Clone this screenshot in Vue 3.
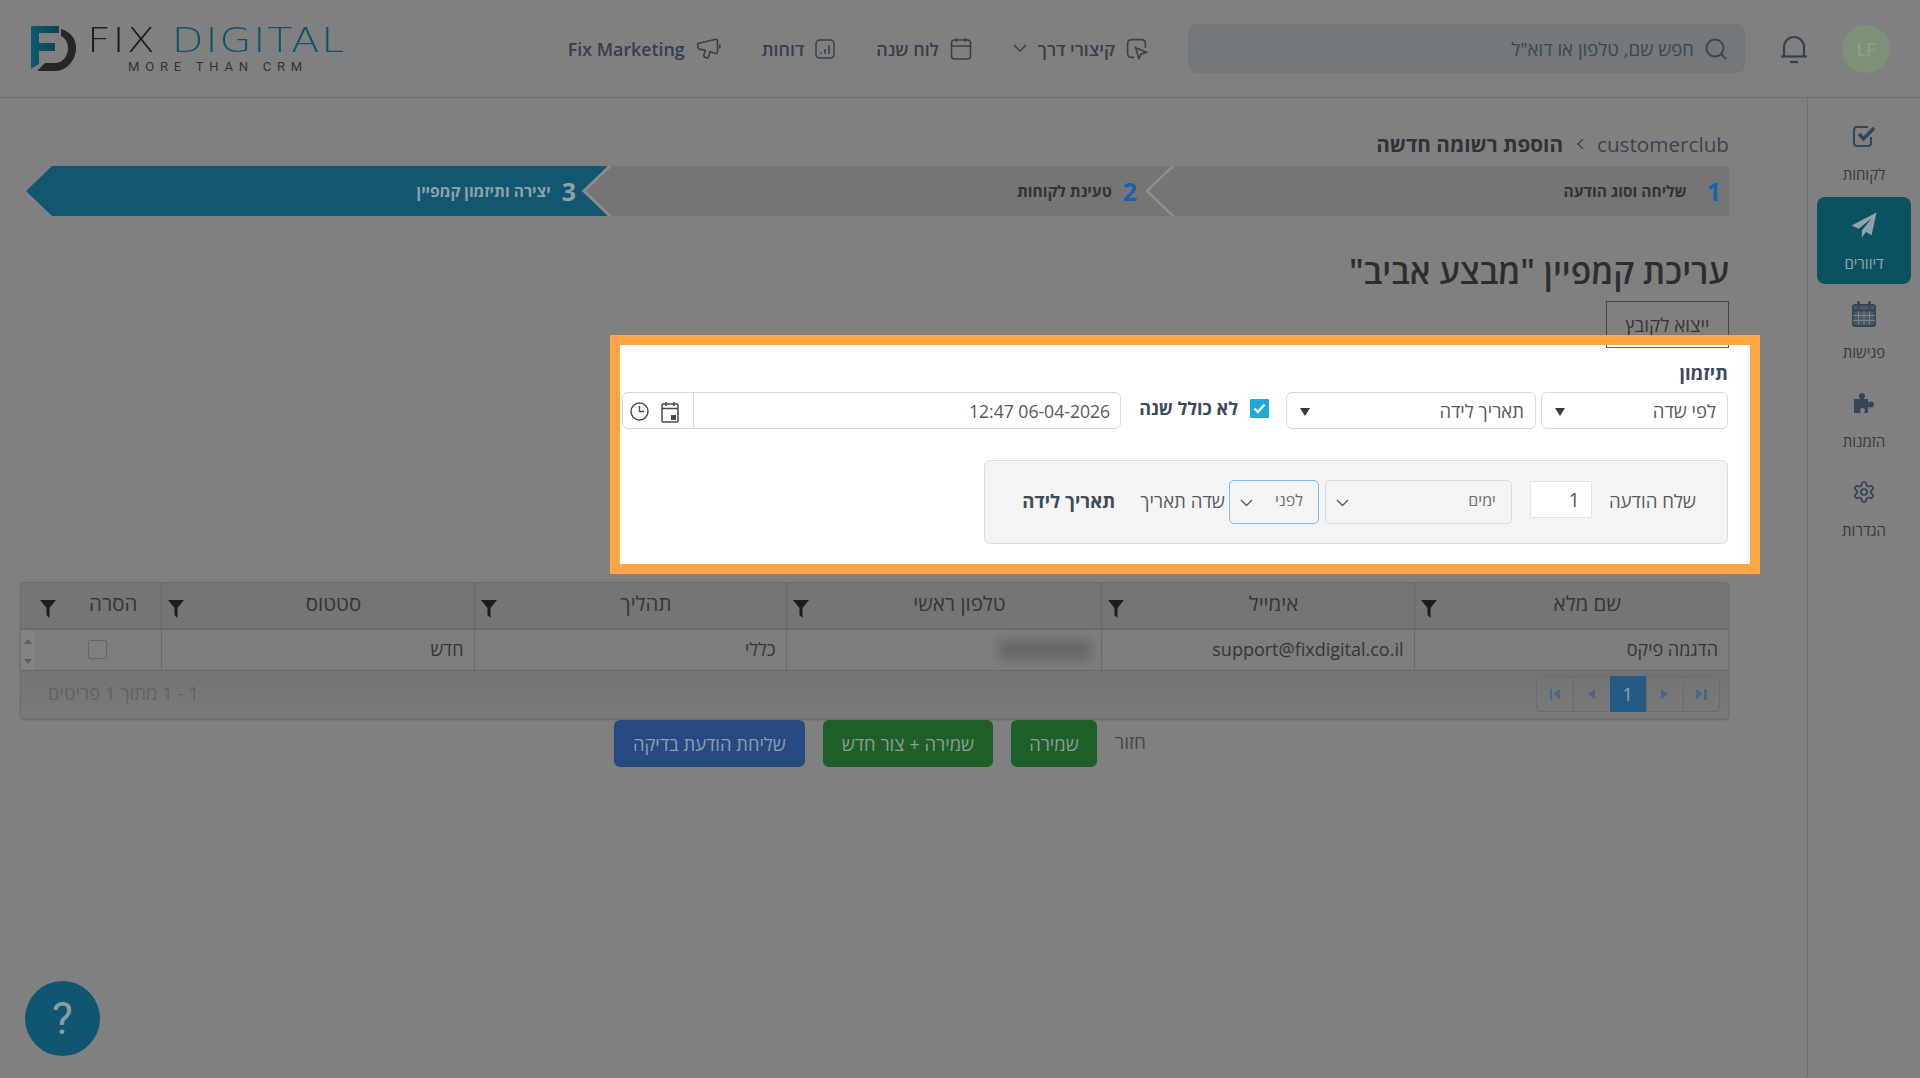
<template>
  <div class="app">
    <header class="topbar">
      <div class="avatar">LF</div>
      <svg class="bell" width="28" height="30" viewBox="0 0 28 30" fill="none" stroke="#36414e" stroke-width="2.200">
        <path d="M4 22V13a10 10 0 0 1 20 0v9" />
        <path d="M1 22.500h26" />
        <path d="M10 28h8" />
      </svg>
      <div class="search">
        <svg width="24" height="24" viewBox="0 0 24 24" fill="none" stroke="#40484e" stroke-width="2">
          <circle cx="11" cy="11" r="8.500" />
          <path d="M17.500 17.500L22 22" />
        </svg>
        <span>חפש שם, טלפון או דוא"ל</span>
      </div>
      <nav class="nav">
        <a class="nav-item">
          <svg width="22" height="22" viewBox="560 28 68 68" fill="none" stroke="#36414e" stroke-width="5">
            <path d="M585 88H578Q565 88 565 75V46Q565 33 578 33H607Q620 33 620 46V58" />
            <path d="M590 58L623 72 606 78 600 92Z" />
          </svg>
          <span>קיצורי דרך</span>
          <svg width="14" height="9" viewBox="0 0 14 9" fill="none" stroke="#36414e" stroke-width="1.500">
            <path d="M1 1l6 6 6-6" />
          </svg>
        </a>
        <a class="nav-item">
          <svg width="22" height="24" viewBox="0 0 22 24" fill="none" stroke="#36414e" stroke-width="1.600">
            <rect x="1.500" y="3" width="19" height="19" rx="3" />
            <path d="M1.500 9h19M6.500 1v4M15.500 1v4" />
          </svg>
          <span>לוח שנה</span>
        </a>
        <a class="nav-item">
          <svg width="20" height="20" viewBox="0 0 20 20" fill="none" stroke="#36414e" stroke-width="1.500">
            <rect x="1" y="1" width="18" height="18" rx="3.500" />
            <path d="M6 15v-1.500M10 15v-5M14 15V6" />
          </svg>
          <span>דוחות</span>
        </a>
        <a class="nav-item">
          <svg width="25" height="23" viewBox="10 25 75 70" fill="none" stroke="#36414e" stroke-width="5">
            <path d="M15 45L70 32Q75 32 75 38V70Q75 76 70 75L52 70 48 85Q46 90 40 88L34 85Q32 83 34 78L38 66 20 62Q15 60 15 55Z" />
            <path d="M82 48v12" />
          </svg>
          <span dir="ltr">Fix Marketing</span>
        </a>
      </nav>
      <div class="logo">
        <svg width="46" height="46" viewBox="0 0 46 46">
          <defs>
            <linearGradient id="logoTeal" x1="0" y1="0" x2="1" y2="0">
              <stop offset="0" stop-color="#0d5a70" />
              <stop offset="1" stop-color="#0b4352" />
            </linearGradient>
          </defs>
          <path d="M0 0H28V7H8V17H24V25H8V38L0 43Z" fill="url(#logoTeal)" />
          <path d="M30 3C40 6 45 13 45 22C45 34 36 45 24 45H6L14 37H24C32 37 37 30 37 22C37 16 34 12 30 10Z" fill="#262626" />
        </svg>
        <div class="logo-text">
          <div class="logo-name"><span class="logo-fix">FIX</span> <span class="logo-digital">DIGITAL</span></div>
          <div class="logo-tag">MORE THAN CRM</div>
        </div>
      </div>
    </header>

    <div class="layout">
      <aside class="sidebar">
        <a class="side-item">
          <svg width="24" height="24" viewBox="0 0 24 24" fill="none" stroke="#36465a" stroke-width="2">
            <path d="M19 13v6a3 3 0 0 1-3 3H5a3 3 0 0 1-3-3V6a3 3 0 0 1 3-3h11" />
            <path d="M7 10l4.500 5L22 4" stroke-width="3.500" />
          </svg>
          <span>לקוחות</span>
        </a>
        <a class="side-item active">
          <svg width="26" height="26" viewBox="0 0 24 24" fill="#8fa3a8">
            <path d="M23.500 .5L.5 12.500 7 15.500 19 6 10 17v6.500l4-5 5 3z" />
          </svg>
          <span>דיוורים</span>
        </a>
        <a class="side-item">
          <svg width="24" height="26" viewBox="0 0 24 26" fill="none" stroke="#36465a">
            <rect x="1" y="4" width="22" height="21" rx="2" stroke-width="2" fill="#4a5868" />
            <path d="M1 9.500h22" stroke-width="2.500" />
            <path d="M6.500 10v14M12 10v14M17.500 10v14M1 14.500h22M1 19.500h22" stroke-width="1" stroke="#7a8086" />
            <path d="M6.500 1v5M17.500 1v5" stroke-width="2.500" stroke-linecap="round" />
          </svg>
          <span>פגישות</span>
        </a>
        <a class="side-item">
          <svg width="24" height="24" viewBox="0 -1 24 24" fill="#36465a">
            <path d="M2 7H8C8 6 7 5.500 7 4A3 3 0 0 1 13 4C13 5.500 12 6 12 7H16V10C17 10 17.500 9.500 19 9.500A3 3 0 0 1 19 15.500C17.500 15.500 17 15 16 15V21H12C12 20 13 19.500 13 18.500A2.500 2.500 0 0 0 8 18.500C8 19.500 9 20 9 21H2Z" />
          </svg>
          <span>הזמנות</span>
        </a>
        <a class="side-item">
          <svg width="24" height="24" viewBox="0 0 24 24" fill="none" stroke="#36465a" stroke-width="1.700">
            <path d="M12.220 2h-.44a2 2 0 0 0-2 2v.18a2 2 0 0 1-1 1.730l-.43.250a2 2 0 0 1-2 0l-.15-.08a2 2 0 0 0-2.730.730l-.22.380a2 2 0 0 0 .73 2.730l.15.1a2 2 0 0 1 1 1.720v.51a2 2 0 0 1-1 1.740l-.15.09a2 2 0 0 0-.73 2.730l.22.380a2 2 0 0 0 2.730.730l.15-.08a2 2 0 0 1 2 0l.43.250a2 2 0 0 1 1 1.730V20a2 2 0 0 0 2 2h.44a2 2 0 0 0 2-2v-.18a2 2 0 0 1 1-1.730l.43-.25a2 2 0 0 1 2 0l.15.08a2 2 0 0 0 2.730-.73l.22-.39a2 2 0 0 0-.73-2.730l-.15-.08a2 2 0 0 1-1-1.740v-.5a2 2 0 0 1 1-1.740l.15-.09a2 2 0 0 0 .73-2.730l-.22-.38a2 2 0 0 0-2.730-.73l-.15.08a2 2 0 0 1-2 0l-.43-.25a2 2 0 0 1-1-1.730V4a2 2 0 0 0-2-2z" />
            <circle cx="12" cy="12" r="3" />
          </svg>
          <span>הגדרות</span>
        </a>
      </aside>

      <main class="main">
        <div class="crumbs">
          <span dir="ltr">customerclub</span>
          <svg width="8" height="12" viewBox="0 0 8 12" fill="none" stroke="#3a4450" stroke-width="1.300"><path d="M7 1L2 6l5 5" /></svg>
          <strong>הוספת רשומה חדשה</strong>
        </div>

        <div class="steps">
          <div v-for="step in steps" :key="step.num" class="step" :class="'step-' + step.num">
            <span class="step-num">{{ step.num }}</span>
            <span class="step-label">{{ step.label }}</span>
          </div>
        </div>

        <h1 class="title">עריכת קמפיין "מבצע אביב"</h1>
        <button class="export">ייצוא לקובץ</button>

        <section class="card">
          <div class="export-tail"></div>
          <div class="card-title">תיזמון</div>
          <div class="sched-row">
            <div class="select sel-type">לפי שדה<i class="tri"></i></div>
            <div class="select sel-field">תאריך לידה<i class="tri"></i></div>
            <label class="check">
              <span class="check-box">
                <svg width="13" height="11" viewBox="0 0 13 11" fill="none" stroke="#fff" stroke-width="2.400"><path d="M1.500 5.500l3.500 3.500 6.500-7.500" /></svg>
              </span>
              <b>לא כולל שנה</b>
            </label>
            <div class="date">
              <span class="date-value" dir="ltr">12:47 06-04-2026</span>
              <span class="date-btns">
                <svg width="18" height="22" viewBox="0 0 18 22" fill="none" stroke="#4a4a4a" stroke-width="1.500">
                  <rect x="1" y="3" width="16" height="18" rx="1" />
                  <path d="M1 7.500h16M5 1v4M13 1v4" />
                  <rect x="10" y="14" width="5" height="5" fill="#4a4a4a" stroke="none" />
                </svg>
                <svg width="19" height="19" viewBox="0 0 19 19" fill="none" stroke="#4a4a4a" stroke-width="1.400">
                  <circle cx="9.500" cy="9.500" r="8.500" />
                  <path d="M9.500 4v5.500H14" />
                </svg>
              </span>
            </div>
          </div>

          <div class="panel">
            <span class="panel-label first">שלח הודעה</span>
            <div class="num-input">1</div>
            <div class="pick pick-unit">ימים<svg class="chev" width="13" height="8" viewBox="0 0 13 8" fill="none" stroke="#555" stroke-width="1.300"><path d="M1 1l5.500 5.500L12 1" /></svg></div>
            <div class="pick pick-when">לפני<svg class="chev" width="13" height="8" viewBox="0 0 13 8" fill="none" stroke="#555" stroke-width="1.300"><path d="M1 1l5.500 5.500L12 1" /></svg></div>
            <span class="panel-label">שדה תאריך</span>
            <b class="panel-value">תאריך לידה</b>
          </div>
        </section>

        <div class="grid">
          <table>
            <colgroup>
              <col v-for="col in columns" :key="col.title" :style="{ width: col.width + 'px' }" />
            </colgroup>
            <thead>
              <tr>
                <th v-for="col in columns" :key="col.title" :class="{ 'th-remove': col.title === 'הסרה' }">
                  <div class="th-inner">
                    <span>{{ col.title }}</span>
                    <svg width="16" height="18" viewBox="0 0 16 18" fill="#1c1c1c"><path d="M0 0H16L9.500 8V18L6.500 15V8Z" /></svg>
                  </div>
                </th>
              </tr>
            </thead>
            <tbody>
              <tr>
                <td>הדגמה פיקס</td>
                <td dir="ltr" class="td-email">support@fixdigital.co.il</td>
                <td class="td-phone"><span class="blurred"></span></td>
                <td>כללי</td>
                <td>חדש</td>
                <td class="td-remove">
                  <div class="remove-wrap">
                    <span class="row-check"></span>
                    <span class="gutter">
                      <i class="up"></i>
                      <i class="down"></i>
                    </span>
                  </div>
                </td>
              </tr>
            </tbody>
          </table>
          <div class="grid-foot">
            <div class="pager">
              <a><i class="arr-r"></i><i class="bar"></i></a>
              <a><i class="arr-r"></i></a>
              <a class="current">1</a>
              <a><i class="arr-l"></i></a>
              <a><i class="bar"></i><i class="arr-l"></i></a>
            </div>
            <span class="foot-info">1 - 1 מתוך 1 פריטים</span>
          </div>
        </div>

        <div class="actions">
          <a class="back">חזור</a>
          <button class="btn green compact">שמירה</button>
          <button class="btn green">שמירה + צור חדש</button>
          <button class="btn blue">שליחת הודעת בדיקה</button>
        </div>
      </main>
    </div>

    <a class="help">?</a>
  </div>
</template>

<script setup>
const steps = [
  { num: 1, label: 'שליחה וסוג הודעה' },
  { num: 2, label: 'טעינת לקוחות' },
  { num: 3, label: 'יצירה ותיזמון קמפיין' },
]

const columns = [
  { title: 'שם מלא', width: 314 },
  { title: 'אימייל', width: 313 },
  { title: 'טלפון ראשי', width: 315 },
  { title: 'תהליך', width: 312 },
  { title: 'סטטוס', width: 313 },
  { title: 'הסרה', width: 140 },
]
</script>

<style>
body {
  background: #808080;
}
</style>

<style scoped>
.app {
  direction: rtl;
  position: relative;
  width: 1920px;
  height: 1078px;
  overflow: hidden;
  background: #808080;
  font-family: "Open Sans", "Liberation Sans", sans-serif;
  color: #3b3f45;
}

/* top bar */
.topbar {
  height: 97px;
  border-bottom: 1px solid #6d6d6d;
  display: flex;
  align-items: center;
  padding: 0 30px 0 31px;
}

.avatar {
  width: 48px;
  height: 48px;
  border-radius: 50%;
  background: #7f9078;
  color: #8e9e88;
  display: flex;
  align-items: center;
  justify-content: center;
  font-size: 18px;
  font-weight: 600;
  direction: ltr;
}

.bell {
  margin-right: 34px;
}

.search {
  width: 557px;
  height: 49px;
  box-sizing: border-box;
  margin-right: 35px;
  background: #72787b;
  border-radius: 8px;
  display: flex;
  align-items: center;
  padding: 0 17px;
  gap: 10px;
  font-size: 18.600px;
  color: #3f464c;
}

.nav {
  display: flex;
  align-items: center;
  gap: 41px;
  margin-right: 40px;
}

.nav-item {
  display: flex;
  align-items: center;
  gap: 11px;
  font-size: 17.800px;
  font-weight: 600;
  color: #333f4d;
}

.logo {
  margin-right: auto;
  direction: ltr;
  display: flex;
  align-items: center;
  gap: 10px;
  width: 315px;
}

.logo-text {
  display: flex;
  flex-direction: column;
  align-items: flex-start;
  line-height: 1;
}

.logo-name {
  font-family: "DejaVu Sans", sans-serif;
  font-weight: 200;
  font-size: 33px;
  letter-spacing: 1.500px;
  white-space: nowrap;
  line-height: 33px;
  transform: scaleX(1.25);
  transform-origin: left center;
}

.logo-fix {
  color: #1f1f1f;
}

.logo-digital {
  color: #0e5366;
}

.logo-tag {
  font-family: Roboto, sans-serif;
  font-size: 13px;
  letter-spacing: 5.800px;
  color: #333;
  margin: 3px 0 0 41px;
  white-space: nowrap;
}

/* page */
.layout {
  display: flex;
  height: 980px;
}

.sidebar {
  width: 113px;
  flex: none;
  border-left: 1px solid #6e737a;
  box-sizing: border-box;
  padding: 10px 9px 0 9px;
  display: flex;
  flex-direction: column;
  gap: 2px;
}

.side-item {
  height: 87px;
  box-sizing: border-box;
  padding-top: 15px;
  border-radius: 8px;
  display: flex;
  flex-direction: column;
  align-items: center;
  gap: 15px;
  font-size: 15px;
  line-height: 20px;
  color: #37393c;
}

.side-item svg {
  height: 26px;
}

.side-item.active {
  background: #0a5262;
  color: #93a8ac;
}

.main {
  flex: 1;
  padding: 35px 78px 0 19px;
  display: flex;
  flex-direction: column;
  align-items: flex-start;
}

.crumbs {
  height: 24px;
  display: flex;
  align-items: center;
  gap: 13px;
  font-size: 20.700px;
  color: #3a4450;
  margin-top: -1px;
  margin-bottom: 1px;
}

.crumbs strong {
  font-weight: 700;
  color: #2d3339;
}

.steps {
  margin-top: 9px;
  display: flex;
  align-self: flex-start;
  height: 50px;
}

.step {
  position: relative;
  display: flex;
  align-items: center;
  gap: 11px;
  font-size: 15.500px;
  font-weight: 700;
  color: #2f3338;
}

.step::before {
  content: "";
  position: absolute;
  inset: 0;
  background: #757575;
  clip-path: polygon(26px 0, 100% 0, 100% 100%, 26px 100%, 0 50%);
  z-index: -1;
}

.step::after {
  content: "";
  position: absolute;
  top: 0;
  bottom: 0;
  left: 0;
  width: 30px;
  background: #8c8c8c;
  clip-path: polygon(26px 0, 30px 0, 4px 50%, 30px 100%, 26px 100%, 0 50%);
  z-index: -1;
}

.step-1 {
  width: 584px;
  z-index: 3;
  padding-right: 8px;
  box-sizing: border-box;
  gap: 20px;
}

.step-2 {
  width: 589px;
  margin-right: -26px;
  z-index: 2;
  padding-right: 34px;
  box-sizing: border-box;
}

.step-3 {
  width: 582px;
  margin-right: -26px;
  z-index: 1;
  padding-right: 32px;
  box-sizing: border-box;
  color: #8fa3ab;
}

.step-3::before {
  background: #125670;
}

.step-3::after {
  display: none;
}

.step-num {
  font-size: 25px;
  font-weight: 700;
  color: #1b62ad;
}

.step-3 .step-num {
  color: #8fa3ab;
}

.title {
  margin: 35px 0 0;
  height: 40px;
  line-height: 40px;
  font-size: 33.700px;
  font-weight: 600;
  color: #2b2e31;
}

.export {
  margin-top: 10px;
  width: 123px;
  height: 47px;
  border: 1px solid #3f4650;
  background: transparent;
  font: inherit;
  font-size: 18.800px;
  color: #33363a;
  padding: 0;
}

/* highlighted schedule card */
.card {
  position: relative;
  margin: -13px -31px 0 0;
  width: 1106px;
  height: 202px;
  padding: 17px 22px 0 2px;
  background: #fff;
  border: 10px solid #ffa545;
}

.export-tail {
  position: absolute;
  top: 0;
  right: 21px;
  width: 123px;
  height: 3px;
  box-sizing: border-box;
  border: 1px solid #5c626b;
  border-top: 0;
}

.card-title {
  height: 22px;
  line-height: 22px;
  font-size: 18.500px;
  font-weight: 700;
  color: #3b4a5c;
}

.sched-row {
  margin-top: 8px;
  display: flex;
  align-items: center;
  font-size: 18.500px;
  color: #55595e;
}

.select {
  flex: none;
  height: 37px;
  box-sizing: border-box;
  border: 1px solid #d9d9d9;
  border-radius: 6px;
  background: #fff;
  display: flex;
  align-items: center;
  justify-content: space-between;
  padding: 0 11px 0 13px;
}

.sel-type {
  width: 187px;
  margin-left: 5px;
}

.sel-field {
  width: 250px;
  margin-left: 17px;
}

.tri {
  width: 0;
  height: 0;
  border-left: 5px solid transparent;
  border-right: 5px solid transparent;
  border-top: 8px solid #3a3a3a;
  margin-top: 2px;
}

.check {
  flex: none;
  display: flex;
  align-items: center;
  gap: 12px;
  margin-left: 18px;
  font-size: 18px;
  white-space: nowrap;
  color: #3b4a5c;
  margin-top: -5px;
}

.check-box {
  width: 19px;
  height: 19px;
  background: #1fa8dc;
  border-radius: 1px;
  display: flex;
  align-items: center;
  justify-content: center;
}

.date {
  flex: 1;
  min-width: 0;
  height: 37px;
  box-sizing: border-box;
  border: 1px solid #d9d9d9;
  border-radius: 6px;
  display: flex;
  align-items: center;
  justify-content: space-between;
  font-size: 17.600px;
}

.date-value {
  padding: 0 10px;
}

.date-btns {
  width: 71px;
  height: 100%;
  border-right: 1px solid #d9d9d9;
  display: flex;
  align-items: center;
  justify-content: center;
  gap: 12px;
  padding: 2px 8px 0 0;
  box-sizing: border-box;
}

.panel {
  margin-top: 31px;
  width: 744px;
  height: 84px;
  box-sizing: border-box;
  background: #f4f4f4;
  border: 1px solid #dcdcdc;
  border-radius: 6px;
  display: flex;
  align-items: center;
  padding-right: 31px;
  font-size: 18.600px;
  color: #565b62;
}

.panel-label {
  margin-left: 6px;
  margin-bottom: 3px;
}

.panel-label.first {
  margin-left: 17px;
}

.num-input {
  width: 62px;
  height: 37px;
  box-sizing: border-box;
  background: #fff;
  border: 1px solid #e3e3e3;
  line-height: 35px;
  font-size: 20px;
  padding-right: 11px;
  margin-left: 18px;
  margin-bottom: 5px;
}

.pick {
  height: 44px;
  box-sizing: border-box;
  border: 1px solid #dcdcdc;
  border-radius: 5px;
  display: flex;
  align-items: center;
  justify-content: space-between;
  padding: 0 15px 4px 10px;
  margin-left: 4px;
  font-size: 16px;
  color: #6a6f74;
}

.chev {
  margin-top: 5px;
}

.pick-unit {
  width: 187px;
  margin-left: 6px;
}

.pick-when {
  width: 90px;
  border-color: #82bdea;
}

.panel-value {
  margin-right: 19px;
  margin-bottom: 3px;
  color: #3f4a57;
}

/* table */
.grid {
  margin-top: 8px;
  width: 1709px;
  height: 137px;
  box-sizing: border-box;
  border: 1px solid #6f6f6f;
  border-radius: 4px;
  overflow: hidden;
  box-shadow: 0 1px 2px rgba(0, 0, 0, .2);
  font-size: 18px;
  color: #33363a;
}

.grid table {
  width: 1707px;
  table-layout: fixed;
  border-collapse: collapse;
}

th {
  height: 45px;
  padding: 0;
  background: #757575;
  font-weight: 400;
  border-left: 1px solid #6a6a6a;
  border-bottom: 2px solid #6a6a6a;
  font-size: 20.500px;
  line-height: 24px;
}

th:last-child,
td:last-child {
  border-left: 0;
}

.th-inner {
  display: flex;
  align-items: center;
  padding-left: 6px;
}

.th-inner span {
  flex: 1;
  text-align: center;
  margin-top: -5px;
  padding-left: 10px;
}

.th-inner svg {
  flex: none;
  margin-top: 6px;
}

.th-remove .th-inner {
  padding-left: 19px;
}

td {
  height: 41px;
  padding: 0 10px 3px;
  box-sizing: border-box;
  border-left: 1px solid #6a6a6a;
  border-bottom: 1px solid #6a6a6a;
  background: #7d7d7d;
  font-size: 18px;
}

.td-email {
  text-align: right;
}

.td-phone {
  position: relative;
  padding-bottom: 0;
}

.blurred {
  display: block;
  width: 92px;
  height: 20px;
  background: #686868;
  filter: blur(5px);
}

.td-remove {
  padding: 0;
}

.remove-wrap {
  display: flex;
  align-items: stretch;
  height: 40px;
}

.row-check {
  flex: 1;
  position: relative;
}

.row-check::before {
  content: "";
  position: absolute;
  top: 10px;
  right: 54px;
  width: 19px;
  height: 19px;
  box-sizing: border-box;
  border: 1px solid #666;
  border-radius: 2px;
  background: #7f7f7f;
}

.gutter {
  width: 14px;
  background: #838383;
  display: flex;
  flex-direction: column;
  align-items: center;
  justify-content: space-between;
  padding: 9px 0 6px;
  box-sizing: border-box;
}

.gutter i {
  width: 0;
  height: 0;
  border-left: 4px solid transparent;
  border-right: 4px solid transparent;
}

.gutter .up {
  border-bottom: 5px solid #5f5f5f;
}

.gutter .down {
  border-top: 5px solid #5f5f5f;
}

.grid-foot {
  height: 49px;
  display: flex;
  align-items: center;
  justify-content: space-between;
  padding: 0 8px 0 27px;
  background: linear-gradient(#747474, #7a7a7a);
}

.pager {
  display: flex;
  height: 36px;
  border: 1px solid #6b6b6b;
  border-radius: 4px;
  box-sizing: border-box;
  margin-top: -3px;
}

.pager a {
  width: 36.500px;
  display: flex;
  align-items: center;
  justify-content: center;
  gap: 1px;
  border-left: 1px solid #6b6b6b;
  box-sizing: border-box;
  direction: ltr;
}

.pager a:last-child {
  border-left: 0;
}

.pager .current {
  background: #255a85;
  color: #8ea2b2;
  border: 0;
  margin-top: -1px;
  margin-bottom: -1px;
}

.pager i {
  display: block;
}

.arr-l {
  width: 0;
  height: 0;
  border-top: 5px solid transparent;
  border-bottom: 5px solid transparent;
  border-right: 7px solid #46688a;
}

.arr-r {
  width: 0;
  height: 0;
  border-top: 5px solid transparent;
  border-bottom: 5px solid transparent;
  border-left: 7px solid #46688a;
}

.bar {
  width: 2.500px;
  height: 11px;
  background: #46688a;
}

.foot-info {
  color: #626262;
  font-size: 18.500px;
  margin-top: -7px;
}

.actions {
  align-self: stretch;
  margin-top: 1px;
  display: flex;
  align-items: center;
  padding-right: 583px;
  gap: 18px;
}

.back {
  font-size: 19px;
  color: #45474a;
  margin-top: -4px;
}

.btn {
  height: 47px;
  border: 0;
  border-radius: 6px;
  font: inherit;
  font-size: 18.400px;
  color: #8d9d95;
  padding: 0 19px;
}

.btn.compact {
  padding: 0 18px;
}

.btn.green {
  background: #1e5e28;
}

.btn.blue {
  background: #264a80;
  color: #8d9db5;
}

.help {
  position: absolute;
  left: 25px;
  top: 981px;
  width: 75px;
  height: 75px;
  border-radius: 50%;
  background: #115670;
  color: #8a9ca4;
  font-family: Roboto, sans-serif;
  font-size: 44px;
  display: flex;
  align-items: center;
  justify-content: center;
}
</style>
